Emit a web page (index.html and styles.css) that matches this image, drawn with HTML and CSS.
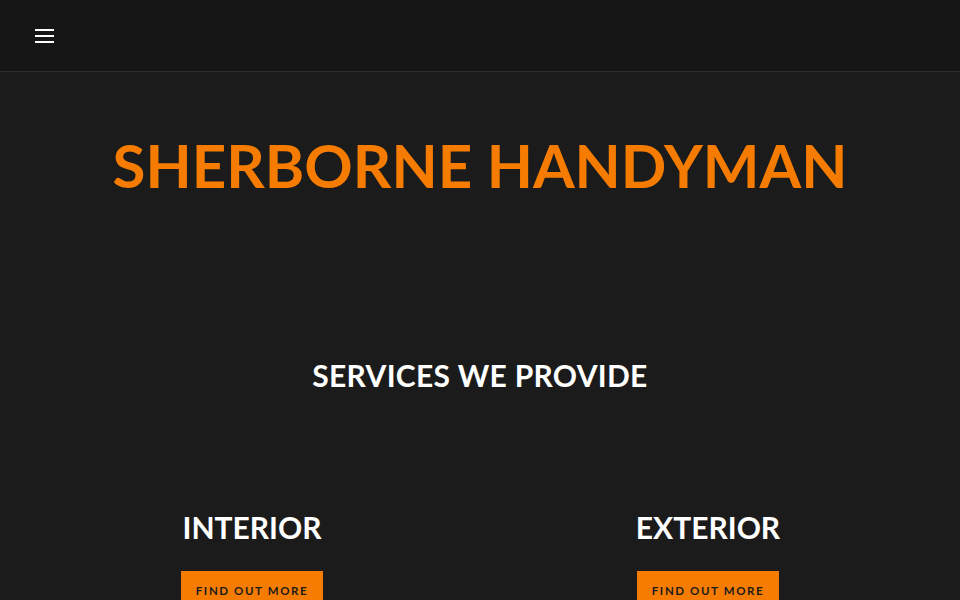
FILE: index.html
```html
<!DOCTYPE html>
<html>
<head>
<meta charset="utf-8">
<link rel="stylesheet" href="styles.css">
</head>
<body>
<header class="topbar">
  <button class="menu" aria-label="Menu">
    <svg width="20" height="16" viewBox="0 0 20 16"><rect x="0" y="1" width="19" height="2" fill="#fff"/><rect x="0" y="7" width="19" height="2" fill="#fff"/><rect x="0" y="13" width="19" height="2" fill="#fff"/></svg>
  </button>
</header>
<main>
  <section class="hero">
    <h1 class="title">SHERBORNE HANDYMAN</h1>
  </section>
  <section class="services">
    <h2 class="section-title">SERVICES WE PROVIDE</h2>
    <div class="cols">
      <div class="col">
        <h3 class="col-title">INTERIOR</h3>
        <a class="btn" href="#">FIND OUT MORE</a>
      </div>
      <div class="col">
        <h3 class="col-title">EXTERIOR</h3>
        <a class="btn" href="#">FIND OUT MORE</a>
      </div>
    </div>
  </section>
</main>
</body>
</html>
```
FILE: styles.css
```css
html, body { margin: 0; padding: 0; }
body {
  background: #1b1b1b;
  font-family: Lato, "Open Sans", sans-serif;
  color: #fff;
  overflow: hidden;
}
.topbar {
  height: 72px;
  background: #161616;
  border-bottom: 1px solid #2e2e2e;
  display: flex;
  align-items: center;
  padding: 0 35px;
  box-sizing: border-box;
}
.menu {
  background: none;
  border: 0;
  padding: 0;
  display: flex;
  cursor: pointer;
}
.hero {
  padding-top: 53px;
  text-align: center;
}
.title {
  margin: 0;
  color: #f57c00;
  font-size: 60px;
  font-weight: 700;
  letter-spacing: 0;
  line-height: 80px;
}
.services {
  padding-top: 150px;
  text-align: center;
}
.section-title {
  margin: 0;
  font-size: 30px;
  font-weight: 700;
  letter-spacing: 0.3px;
  line-height: 40px;
}
.cols {
  display: grid;
  grid-template-columns: 1fr 1fr;
  padding: 112px 24px 0;
}
.col {
  display: flex;
  flex-direction: column;
  align-items: center;
}
.col-title {
  margin: 0 0 24px;
  font-size: 30px;
  font-weight: 700;
  letter-spacing: 0;
  line-height: 40px;
}
.btn {
  display: block;
  background: #f57c00;
  color: #1b1b1b;
  text-decoration: none;
  font-size: 11.5px;
  font-weight: 700;
  letter-spacing: 1.6px;
  line-height: 14px;
  padding: 13px 0;
  width: 142px;
  white-space: nowrap;
  text-align: center;
}
```
